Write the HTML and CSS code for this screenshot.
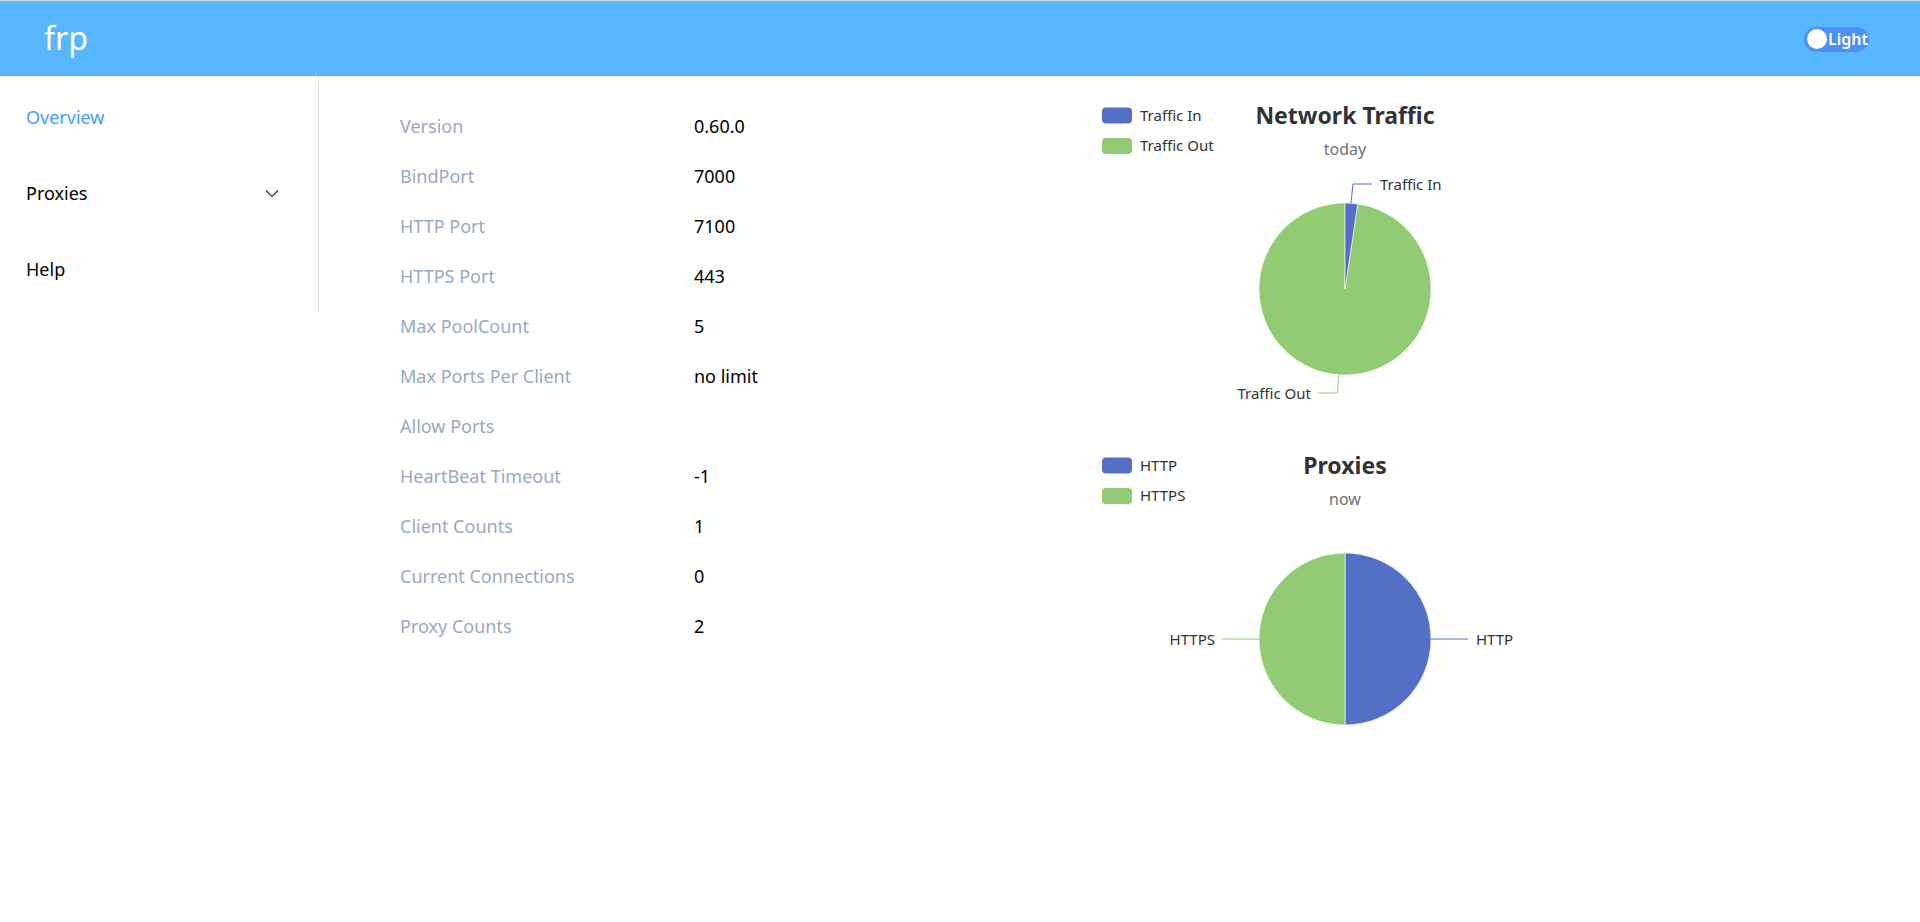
FILE: index.html
```
<!DOCTYPE html>
<html lang="en">
<head>
    <meta charset="UTF-8">
    <meta name="viewport" content="width=device-width, initial-scale=1.0">
    <title>frp server dashboard</title>
    <link rel="stylesheet" href="styles.css">
</head>
<body>
    <header class="topbar">
        <div class="brand">frp</div>
        <div class="theme-switch">
            <span class="knob"></span>
            <span class="switch-text">Light</span>
        </div>
    </header>
    <div class="layout">
        <aside class="sidebar">
            <ul class="menu">
                <li class="menu-item active">Overview</li>
                <li class="menu-item">
                    <span>Proxies</span>
                    <svg class="arrow" width="14" height="9" viewBox="0 0 14 9"><polyline points="1,1.5 7,7.5 13,1.5" fill="none" stroke="#303133" stroke-width="1.1"/></svg>
                </li>
                <li class="menu-item">Help</li>
            </ul>
        </aside>
        <main class="main">
            <section class="server-info">
                <div class="info-row"><span class="info-label">Version</span><span class="info-value">0.60.0</span></div>
                <div class="info-row"><span class="info-label">BindPort</span><span class="info-value">7000</span></div>
                <div class="info-row"><span class="info-label">HTTP Port</span><span class="info-value">7100</span></div>
                <div class="info-row"><span class="info-label">HTTPS Port</span><span class="info-value">443</span></div>
                <div class="info-row"><span class="info-label">Max PoolCount</span><span class="info-value">5</span></div>
                <div class="info-row"><span class="info-label">Max Ports Per Client</span><span class="info-value">no limit</span></div>
                <div class="info-row"><span class="info-label">Allow Ports</span><span class="info-value"></span></div>
                <div class="info-row"><span class="info-label">HeartBeat Timeout</span><span class="info-value">-1</span></div>
                <div class="info-row"><span class="info-label">Client Counts</span><span class="info-value">1</span></div>
                <div class="info-row"><span class="info-label">Current Connections</span><span class="info-value">0</span></div>
                <div class="info-row"><span class="info-label">Proxy Counts</span><span class="info-value">2</span></div>
            </section>
            <section class="charts">
                <!-- traffic pie -->
                <svg class="chart" width="500" height="350" viewBox="0 0 500 350">
                    <rect x="7" y="10.5" width="30" height="16" rx="4" fill="#5470c6"/>
                    <text class="legend-text" x="45" y="23.5">Traffic In</text>
                    <rect x="7" y="41" width="30" height="16" rx="4" fill="#91cc75"/>
                    <text class="legend-text" x="45" y="54">Traffic Out</text>
                    <text class="chart-title" x="250" y="26.5" text-anchor="middle">Network Traffic</text>
                    <text class="chart-sub" x="250" y="57.5" text-anchor="middle">today</text>
                    <path d="M250 192 L262.71 106.94 A86 86 0 1 1 250 106 Z" fill="#91cc75" stroke="#fff" stroke-width="0.6"/>
                    <path d="M250 192 L250 106 A86 86 0 0 1 262.71 106.94 Z" fill="#5470c6" stroke="#fff" stroke-width="0.6"/>
                    <polyline points="256,106 258,87 277,87" fill="none" stroke="#5470c6" stroke-width="1"/>
                    <text class="label-text" x="285" y="92.5">Traffic In</text>
                    <polyline points="243.5,278 242.5,296 223,296" fill="none" stroke="#91cc75" stroke-width="1"/>
                    <text class="label-text" x="216" y="301.5" text-anchor="end">Traffic Out</text>
                </svg>
                <!-- proxies pie -->
                <svg class="chart" width="500" height="350" viewBox="0 0 500 350">
                    <rect x="7" y="10.5" width="30" height="16" rx="4" fill="#5470c6"/>
                    <text class="legend-text" x="45" y="23.5">HTTP</text>
                    <rect x="7" y="41" width="30" height="16" rx="4" fill="#91cc75"/>
                    <text class="legend-text" x="45" y="54">HTTPS</text>
                    <text class="chart-title" x="250" y="26.5" text-anchor="middle">Proxies</text>
                    <text class="chart-sub" x="250" y="57.5" text-anchor="middle">now</text>
                    <path d="M250 192 L250 106 A86 86 0 0 1 250 278 Z" fill="#5470c6" stroke="#fff" stroke-width="0.6"/>
                    <path d="M250 192 L250 278 A86 86 0 0 1 250 106 Z" fill="#91cc75" stroke="#fff" stroke-width="0.6"/>
                    <line x1="336" y1="192" x2="373" y2="192" stroke="#5470c6" stroke-width="1"/>
                    <text class="label-text" x="381" y="197.5">HTTP</text>
                    <line x1="164" y1="192" x2="127" y2="192" stroke="#91cc75" stroke-width="1"/>
                    <text class="label-text" x="120" y="197.5" text-anchor="end">HTTPS</text>
                </svg>
            </section>
        </main>
    </div>
</body>
</html>
```
FILE: styles.css
```
body {
    margin: 0;
    background: #fff;
    font-family: "Noto Sans", "Liberation Sans", sans-serif;
    color: #303133;
}
.topbar {
    height: 75px;
    border-top: 1px solid #c9dbe8;
    background: #58b7ff;
    display: flex;
    align-items: center;
    justify-content: space-between;
    padding: 0 51px 0 44px;
}
.brand {
    color: #fff;
    font-size: 32px;
    line-height: 1;
    margin-top: -2px;
}
.theme-switch {
    display: flex;
    align-items: center;
    width: 65px;
    height: 25px;
    border-radius: 13px;
    background: #4d90f5;
    box-sizing: border-box;
    padding-left: 3px;
    margin-top: 1px;
}
.knob {
    width: 20px;
    height: 20px;
    border-radius: 50%;
    background: #fff;
}
.switch-text {
    color: #fff;
    font-size: 16px;
    font-weight: 600;
    margin-left: 1px;
    line-height: 1;
}
.layout {
    display: flex;
    align-items: flex-start;
}
.sidebar {
    width: 318px;
    flex-shrink: 0;
    border-right: 1px solid #dcdfe6;
}
.menu {
    list-style: none;
    margin: 0;
    padding: 3px 0 4px;
}
.menu-item {
    height: 76px;
    display: flex;
    align-items: center;
    justify-content: space-between;
    padding: 0 39px 0 26px;
    font-size: 18px;
    color: #000;
}
.menu-item.active {
    color: #409eff;
}
.arrow {
    margin-top: 1px;
}
.main {
    flex: 1;
    display: flex;
    padding-left: 81px;
}
.server-info {
    width: 695px;
    padding-top: 25px;
}
.info-row {
    height: 50px;
    display: flex;
    align-items: center;
    font-size: 18px;
}
.info-label {
    width: 294px;
    color: #99a9bf;
}
.info-value {
    color: #000;
}
.charts {
    display: flex;
    flex-direction: column;
    padding-top: 21px;
}
.chart {
    display: block;
    font-family: "Noto Sans", "Liberation Sans", sans-serif;
}
.legend-text {
    font-size: 15px;
    fill: #333;
}
.chart-title {
    font-size: 23px;
    font-weight: bold;
    fill: #333;
}
.chart-sub {
    font-size: 16px;
    fill: #6e7079;
}
.label-text {
    font-size: 15px;
    fill: #333;
}
```
